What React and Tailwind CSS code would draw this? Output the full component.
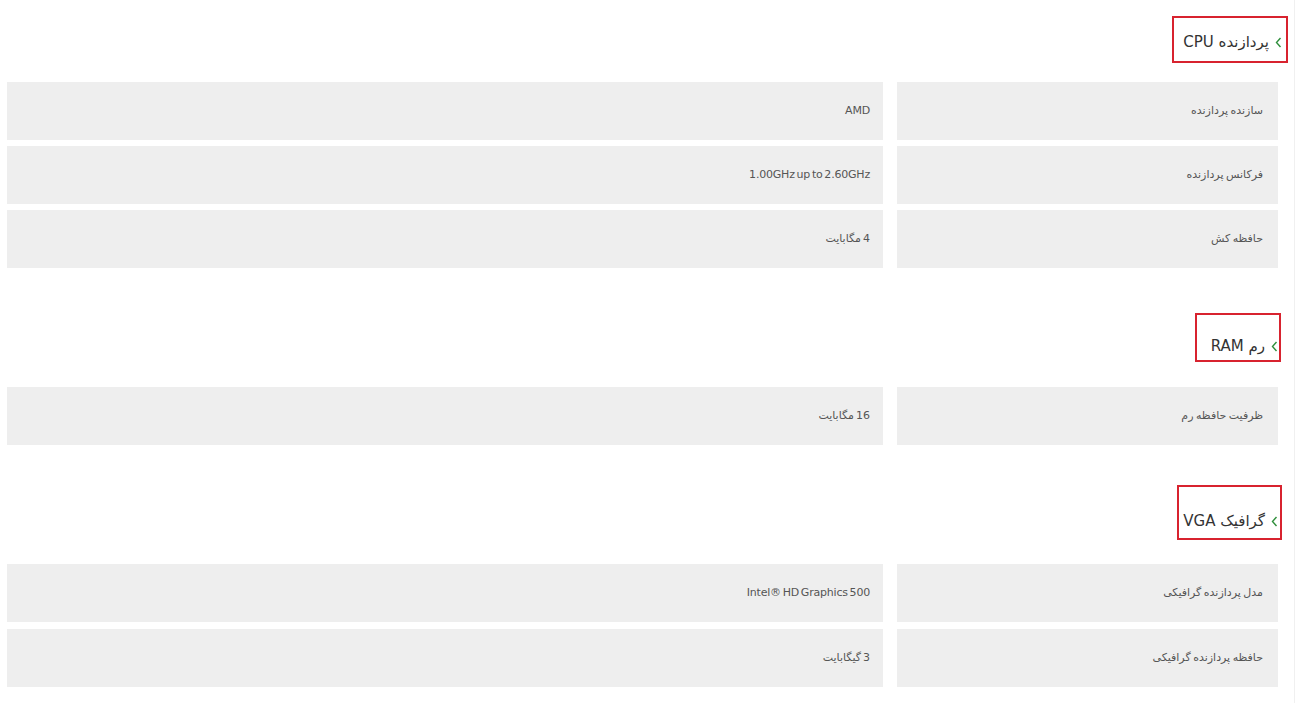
import React from "react";

const Chevron = () => (
  <svg width="7" height="11" viewBox="0 0 7 11" className="shrink-0">
    <path d="M5.5 1 L1.5 5.5 L5.5 10" fill="none" stroke="#2f8f3c" strokeWidth="1.4" />
  </svg>
);

function Title({ text, boxClass }) {
  return (
    <div className="flex justify-start">
      <div className={"flex items-center gap-[6px] border-2 border-[#d8232f] " + boxClass}>
        <Chevron />
        <span className="text-[15px] leading-none text-[#333]">{text}</span>
      </div>
    </div>
  );
}

function Row({ label, value }) {
  return (
    <div className="grid grid-cols-[381px_1fr] gap-[14px] h-[58px]">
      <div className="bg-[#eeeeee] flex items-center pr-[15px] text-[11px] text-[#555] [word-spacing:-1px]">{label}</div>
      <div className="bg-[#eeeeee] flex items-center pr-[13px] text-[11px] text-[#555] tracking-[-0.2px] [word-spacing:-1.5px]">{value}</div>
    </div>
  );
}

export default function App() {
  return (
    <div
      dir="rtl"
      className="w-[1295px] h-[703px] bg-white border-r border-[#f0f0f0] pr-[16px] pl-[7px]"
      style={{ fontFamily: '"DejaVu Sans", "Noto Sans", sans-serif' }}
    >
      <div className="pt-[16px]">
        <Title text="پردازنده CPU" boxClass="h-[47px] w-[116px] mr-[-10px] pr-[4px] pt-[6px]" />
      </div>
      <div className="mt-[19px] flex flex-col gap-[6px]">
        <Row label="سازنده پردازنده" value="AMD" />
        <Row label="فرکانس پردازنده" value="1.00GHz up to 2.60GHz" />
        <Row label="حافظه کش" value="4 مگابایت" />
      </div>

      <div className="mt-[45px]">
        <Title text="رم RAM" boxClass="h-[49px] w-[86px] mr-[-3px] pr-[1px] pt-[17px]" />
      </div>
      <div className="mt-[25px] flex flex-col gap-[6px]">
        <Row label="ظرفیت حافظه رم" value="16 مگابایت" />
      </div>

      <div className="mt-[40px]">
        <Title text="گرافیک VGA" boxClass="h-[55px] w-[105px] mr-[-4px] pr-[2px] pt-[17px]" />
      </div>
      <div className="mt-[24px] flex flex-col gap-[7px]">
        <Row label="مدل پردازنده گرافیکی" value="Intel® HD Graphics 500" />
        <Row label="حافظه پردازنده گرافیکی" value="3 گیگابایت" />
      </div>
    </div>
  );
}
